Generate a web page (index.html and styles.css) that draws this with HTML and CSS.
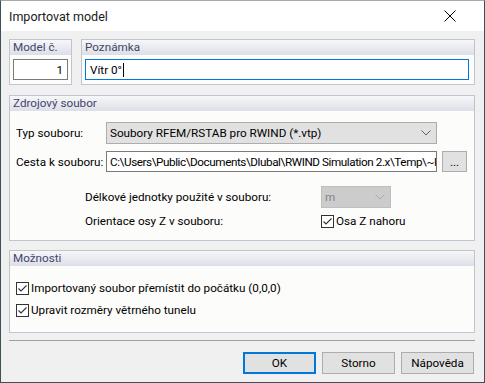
FILE: index.html
```html
<!doctype html>
<html lang="cs">
<head>
  <meta charset="UTF-8" />
  <meta name="viewport" content="width=device-width, initial-scale=1.0" />
  <title>Importovat model</title>
  <link rel="stylesheet" href="styles.css">
</head>
<body>
  <div class="dialog">
    <header class="titlebar">
      <span class="title">Importovat model</span>
      <svg class="close" width="12" height="12" viewBox="0 0 12 12">
        <path d="M0.5 0.5 L11.5 11.5 M11.5 0.5 L0.5 11.5" stroke="#000" stroke-width="1" fill="none" />
      </svg>
    </header>

    <main class="content">
      <div class="top-row">
        <section class="group group-model">
          <div class="group-head">Model č.</div>
          <div class="group-body">
            <div class="field field-num">1</div>
          </div>
        </section>
        <section class="group group-note">
          <div class="group-head">Poznámka</div>
          <div class="group-body">
            <div class="field field-focus">Vítr 0°<span class="caret"></span></div>
          </div>
        </section>
      </div>

      <section class="group group-source">
        <div class="group-head">Zdrojový soubor</div>
        <div class="group-body source-body">
          <div class="form-row">
            <label class="form-label">Typ souboru:</label>
            <div class="select">
              <span>Soubory RFEM/RSTAB pro RWIND (*.vtp)</span>
              <svg class="chevron" width="10" height="6" viewBox="0 0 10 6"><path d="M0.5 0.5 L5 5 L9.5 0.5" stroke="#606060" fill="none" /></svg>
            </div>
          </div>
          <div class="form-row row-path">
            <label class="form-label">Cesta k souboru:</label>
            <div class="field field-path"><span class="path-text">C:\Users\Public\Documents\Dlubal\RWIND Simulation 2.x\Temp\~R</span></div>
            <button class="btn btn-browse">...</button>
          </div>

          <div class="sub-grid">
            <span class="sub-label">Délkové jednotky použité v souboru:</span>
            <div class="select select-disabled">
              <span>m</span>
              <svg class="chevron" width="10" height="6" viewBox="0 0 10 6"><path d="M0.5 0.5 L5 5 L9.5 0.5" stroke="#a8a8a8" fill="none" /></svg>
            </div>
            <span class="sub-label">Orientace osy Z v souboru:</span>
            <label class="check">
              <svg class="checkbox" width="13" height="13" viewBox="0 0 13 13"><rect x="0.5" y="0.5" width="12" height="12" fill="#fff" stroke="#333" /><path d="M2.5 6.5 L5 9 L10.5 3.5" stroke="#333" stroke-width="1.1" fill="none" /></svg>
              <span>Osa Z nahoru</span>
            </label>
          </div>
        </div>
      </section>

      <section class="group group-options">
        <div class="group-head">Možnosti</div>
        <div class="group-body options-body">
          <label class="check">
            <svg class="checkbox" width="13" height="13" viewBox="0 0 13 13"><rect x="0.5" y="0.5" width="12" height="12" fill="#fff" stroke="#333" /><path d="M2.5 6.5 L5 9 L10.5 3.5" stroke="#333" stroke-width="1.1" fill="none" /></svg>
            <span>Importovaný soubor přemístit do počátku (0,0,0)</span>
          </label>
          <label class="check">
            <svg class="checkbox" width="13" height="13" viewBox="0 0 13 13"><rect x="0.5" y="0.5" width="12" height="12" fill="#fff" stroke="#333" /><path d="M2.5 6.5 L5 9 L10.5 3.5" stroke="#333" stroke-width="1.1" fill="none" /></svg>
            <span>Upravit rozměry větrného tunelu</span>
          </label>
        </div>
      </section>

      <hr class="separator">

      <footer class="buttons">
        <button class="btn btn-default">OK</button>
        <button class="btn">Storno</button>
        <button class="btn">Nápověda</button>
      </footer>
    </main>
  </div>
</body>
</html>
```

FILE: styles.css
```css
* {
  margin: 0;
  padding: 0;
  box-sizing: border-box;
}

html, body {
  width: 485px;
  height: 383px;
  overflow: hidden;
  background: #f0f0f0;
  font-family: Roboto, "Liberation Sans", Arial, sans-serif;
  font-size: 11.7px;
  color: #000;
}

.dialog {
  width: 485px;
  height: 383px;
  display: flex;
  flex-direction: column;
  border: 1px solid #3e4f56;
  border-top-color: #a9a9a9;
  background: #f0f0f0;
}

.titlebar {
  height: 30px;
  background: #fff;
  display: flex;
  align-items: center;
  justify-content: space-between;
  padding: 0 28px 0 8px;
}

.title {
  font-size: 12.5px;
  color: #1a1a1a;
}

.close {
  display: block;
}

.content {
  flex: 1;
  padding: 8px 9px 0 8px;
  display: flex;
  flex-direction: column;
}

.top-row {
  display: flex;
  gap: 9px;
}

.group {
  border: 1px solid #bfc4d0;
  background: #fcfcfa;
  display: flex;
  flex-direction: column;
}

.group-head {
  height: 15px;
  line-height: 15px;
  padding-left: 3px;
  color: #44446a;
  background: linear-gradient(#f6f7f9, #dcdfe7);
}

.group-model {
  width: 63px;
  height: 46px;
}

.group-note {
  flex: 1;
  height: 46px;
}

.group-model .group-body,
.group-note .group-body {
  padding: 4px 3px 0 3px;
}

.group-note .group-body {
  padding-right: 5px;
}

.field {
  height: 21px;
  border: 1px solid #7a7a7a;
  background: #fff;
  display: flex;
  align-items: center;
  padding: 0 4px;
  white-space: nowrap;
  overflow: hidden;
}

.field-num {
  justify-content: flex-end;
  width: 55px;
}

.field-focus {
  border-color: #0078d7;
}

.caret {
  display: inline-block;
  width: 1px;
  height: 14px;
  background: #000;
  margin-left: 1px;
}

.group-source {
  margin-top: 10px;
  height: 146px;
}

.source-body {
  padding: 11px 0 0 6px;
}

.form-row {
  display: flex;
  align-items: center;
}

.row-path {
  margin-top: 7px;
}

.form-label {
  width: 90px;
  flex: none;
  white-space: nowrap;
}

.select {
  width: 331px;
  height: 22px;
  border: 1px solid #adadad;
  background: #e1e1e1;
  display: flex;
  align-items: center;
  justify-content: space-between;
  padding: 0 3px 0 3px;
}

.select .chevron {
  margin-right: 2px;
}

.field-path {
  width: 331px;
  flex: none;
  padding-left: 3px;
}

.path-text {
  letter-spacing: -0.42px;
}

.btn {
  font-family: inherit;
  font-size: 11.7px;
  color: #000;
  background: #e1e1e1;
  border: 1px solid #adadad;
  height: 22px;
}

.btn-browse {
  width: 25px;
  height: 21px;
  flex: none;
  margin-left: 5px;
  line-height: 16px;
}

.sub-grid {
  display: grid;
  grid-template-columns: 236px 70px;
  grid-template-rows: 22px 22px;
  row-gap: 2px;
  align-items: center;
  margin: 14px 0 0 69px;
}

.select-disabled {
  width: 70px;
  background: #cccccc;
  border-color: #bfbfbf;
  color: #838383;
}

.check {
  display: flex;
  align-items: center;
  gap: 2px;
  white-space: nowrap;
}

.checkbox {
  display: block;
  flex: none;
}

.group-options {
  margin-top: 9px;
  height: 83px;
}

.options-body {
  padding: 14px 0 0 6px;
  display: flex;
  flex-direction: column;
  gap: 6px;
}

.options-body .check {
  height: 16px;
}

.separator {
  border: none;
  border-top: 1px solid #a0a0a0;
  margin-top: 7px;
}

.buttons {
  display: flex;
  justify-content: flex-end;
  gap: 6px;
  margin-top: 11px;
  padding-right: 1px;
}

.buttons .btn {
  width: 73px;
}

.btn-default {
  border: 2px solid #0078d7;
}
```
